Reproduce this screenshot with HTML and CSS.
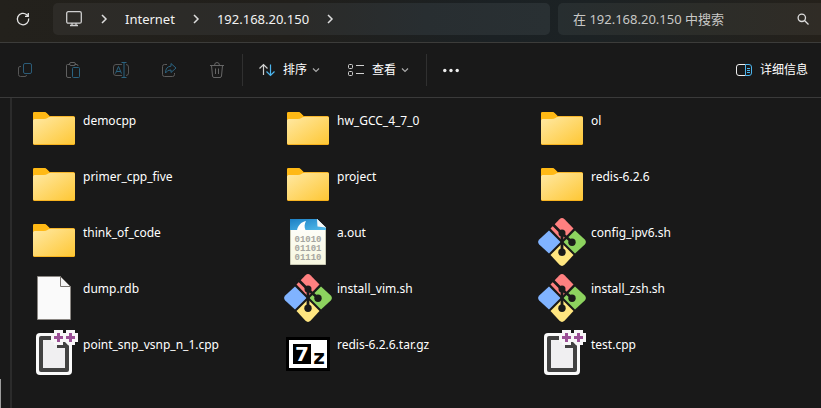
FILE: index.html
```html
<!DOCTYPE html>
<html lang="zh-CN">
<head>
<meta charset="utf-8">
<meta name="viewport" content="width=device-width, initial-scale=1">
<title>192.168.20.150</title>
<link rel="stylesheet" href="styles.css">
</head>
<body>
<svg class="defs" aria-hidden="true">
  <defs>
    <linearGradient id="folder-front" x1="0" y1="0" x2="1" y2="1">
      <stop offset="0" stop-color="#ffe9a4"/><stop offset="1" stop-color="#fec734"/>
    </linearGradient>
    <linearGradient id="page-head" x1="0" y1="0" x2="1" y2="1">
      <stop offset="0" stop-color="#1c7fc4"/><stop offset="1" stop-color="#55bdec"/>
    </linearGradient>
    <linearGradient id="page-body" x1="0" y1="0" x2="0" y2="1">
      <stop offset="0" stop-color="#ffffff"/><stop offset="1" stop-color="#f7f7df"/>
    </linearGradient>
  </defs>
  <symbol id="folder" viewBox="0 0 48 48">
    <path d="M3 7.500Q3 6 4.500 6H14Q15.500 6 16.500 7L19.500 10H43.500Q45 10 45 11.500V37.500Q45 39 43.500 39H4.500Q3 39 3 37.500Z" fill="#f5a90f"/>
    <path d="M3 7.500Q3 6 4.500 6H14Q15.500 6 16.500 7L19.500 10L17 13H3Z" fill="#ffb915"/>
    <path d="M3 14.500Q3 13 4.500 13H14Q16 13 17.500 12L18.500 11.300Q19.500 10.800 21 10.800H43.500Q45 10.800 45 12.300V37Q45 38.300 43.500 38.300H4.500Q3 38.300 3 37Z" fill="url(#folder-front)"/>
  </symbol>
  <symbol id="git" viewBox="0 0 48 48">
    <path d="M21.500 1.200Q24 -1 26.500 1.200L35.500 10.500L24 22.500L12.500 10.500Z" fill="#ff8080"/>
    <path d="M11 12.500L22.500 24L11 35.500L1.200 26.500Q-1 24 1.200 21.500Z" fill="#80b3ff"/>
    <path d="M37 12.500L46.800 21.500Q49 24 46.800 26.500L37 35.500L25.500 24Z" fill="#8dd35f"/>
    <path d="M24 25.500L35.500 37L26.500 46.800Q24 49 21.500 46.800L12.500 37Z" fill="#ffe680"/>
    <path d="M13.500 5L24 15.500V34M24 15.500L34 24" fill="none" stroke="#1a1a1a" stroke-width="2.800"/>
    <g fill="#1a1a1a"><circle cx="24" cy="15" r="3.500"/><circle cx="34" cy="24.300" r="3.700"/><circle cx="24" cy="34.300" r="3.700"/></g>
  </symbol>
  <symbol id="blank" viewBox="0 0 48 48">
    <path d="M7.500 2.500H30.500L40.500 12.500V45.500H7.500Z" fill="#fafafa" stroke="#8b8783"/>
    <path d="M30.500 2.500V12.500H40.500Z" fill="#f4f4f4" stroke="#77736f"/>
  </symbol>
  <symbol id="cpp" viewBox="0 0 48 48">
    <rect x="6" y="3" width="36" height="42" rx="4" fill="#fafafa"/>
    <path d="M9 8Q9 6 11 6H28L39 17V40Q39 42 37 42H11Q9 42 9 40Z" fill="#424242"/>
    <path d="M13 10H27V18H35V38H13Z" fill="#f0eff1"/>
    <path d="M21 3H42V12H33L36 15H27V12H21Z" fill="#fafafa"/>
    <path d="M33 12H36L39 16V19H36L33 15Z" fill="#424242"/>
    <path d="M24 0H33V3H36V0H45V3H48V12H45V15H38L35 12H33V15H24V12H21V3H24Z" fill="#f8f7f8"/>
    <path d="M27 3H30V6H33V9H30V12H27V9H24V6H27ZM39 3H42V6H45V9H42V12H39V9H36V6H39Z" fill="#9b4f96"/>
  </symbol>
  <symbol id="next" viewBox="0 0 8 10"><path d="M2 1L6 5L2 9" fill="none" stroke="#ddd" stroke-width="1.500"/></symbol>
  <symbol id="down" viewBox="0 0 8 6"><path d="M1 1.500L4 4.500L7 1.500" fill="none" stroke="#aaa" stroke-width="1.200"/></symbol>
</svg>

<header class="topbar">
  <button class="refresh" aria-label="刷新"><svg class="i16" viewBox="0 0 16 16" fill="none" stroke="#e4e4e4" stroke-width="1.300"><path d="M13.700 7.500A5.700 5.700 0 1 1 11.800 3.800L13 5M13.300 2V5.300H10"/></svg></button>
  <nav class="address" aria-label="地址">
    <svg class="monitor" viewBox="0 0 18 18" fill="none" stroke="#cfcfcf" stroke-width="1.300"><rect x="1.700" y="1.700" width="14.600" height="11.500" rx="1.500"/><path d="M7 13V15M11 13V15M5 15.500H13"/></svg>
    <svg class="next"><use href="#next"/></svg>
    <a href="#">Internet</a>
    <svg class="next"><use href="#next"/></svg>
    <a href="#">192.168.20.150</a>
    <svg class="next"><use href="#next"/></svg>
  </nav>
  <label class="search">
    <input type="search" aria-label="搜索" placeholder="在 192.168.20.150 中搜索">
    <svg class="lens" viewBox="0 0 12 12" fill="none" stroke="#ddd" stroke-width="1.300"><circle cx="4.800" cy="4.800" r="3.700"/><path d="M7.500 7.500L11.500 11.500"/></svg>
  </label>
</header>

<div class="toolbar" role="toolbar">
  <button class="tool" aria-label="复制" disabled><svg class="i16" viewBox="0 0 16 16" fill="none" stroke="#565656"><path d="M4 4.500H3Q1.500 4.500 1.500 6V12.500Q1.500 14.500 3.500 14.500H8Q9.500 14.500 9.500 13"/><rect x="6.500" y="1.500" width="8" height="10" rx="1.500" stroke="#2b5c78"/></svg></button>
  <button class="tool" aria-label="粘贴" disabled><svg class="i16" viewBox="0 0 16 16" fill="none" stroke="#606060"><path d="M5 2.500H2.500Q1.500 2.500 1.500 3.500V14Q1.500 15.500 3 15.500H6M9.500 2.500H12Q13 2.500 13 4"/><rect x="4.500" y=".5" width="6" height="3" rx="1.500"/><rect x="7.500" y="5.500" width="7" height="10" rx="1" stroke="#2b6380"/></svg></button>
  <button class="tool" aria-label="重命名" disabled><svg class="i16" viewBox="0 0 16 16" fill="none" stroke="#565656"><path d="M9 2.500H3Q.5 2.500 .5 5V11Q.5 13.500 3 13.500H9M13 2.500Q15.500 2.500 15.500 5V11Q15.500 13.500 13 13.500"/><path d="M8.500 .5H13.500M11 .5V15.500M8.500 15.500H13.500M2.500 11.500L5.500 4.500L8.500 11.500M3.500 9.500H7.500" stroke="#2b6380"/></svg></button>
  <button class="tool" aria-label="共享" disabled><svg class="i16" viewBox="0 0 16 16" fill="none" stroke="#5c5c5c"><path d="M6 2.500H3.500Q1.500 2.500 1.500 4.500V12.500Q1.500 14.500 3.500 14.500H11.500Q13.500 14.500 13.500 12.500V11"/><path d="M10 1.500L15 6L10 10.500V8Q6.500 7.500 4.500 11Q4.500 4.500 10 4.200Z" stroke="#2b6380" stroke-linejoin="round"/></svg></button>
  <button class="tool" aria-label="删除" disabled><svg class="i16" viewBox="0 0 16 16" fill="none" stroke="#666"><path d="M1 3.500H15M5.500 3.500Q5.500 .5 8 .5T10.500 3.500M2.500 3.500L3.500 14Q3.700 15.500 5 15.500H11Q12.300 15.500 12.500 14L13.500 3.500M6.500 6.500V12M9.500 6.500V12"/></svg></button>
  <span class="divider"></span>
  <button class="menu"><svg class="i16" viewBox="0 0 16 16" fill="none" stroke-width="1.200"><path d="M4.500 13V2.500M.5 6.500L4.500 2.500L8.500 6.500" stroke="#d0d0d0"/><path d="M11.500 2.500V13.500M7.500 9.500L11.500 13.500L15.500 9.500" stroke="#4cb5ee"/></svg>排序<svg class="down"><use href="#down"/></svg></button>
  <button class="menu view"><svg class="i16" viewBox="0 0 16 16" fill="none" stroke="#d0d0d0"><rect x=".5" y="2.500" width="4" height="4" rx="1"/><rect x=".5" y="9.500" width="4" height="4" rx="1"/><path d="M8 3.500H16M8 11.500H16"/></svg>查看<svg class="down"><use href="#down"/></svg></button>
  <span class="divider"></span>
  <button class="tool" aria-label="更多"><svg class="i16" viewBox="0 0 16 16" fill="#eee"><circle cx="1.800" cy="8.500" r="1.700"/><circle cx="8" cy="8.500" r="1.700"/><circle cx="14.200" cy="8.500" r="1.700"/></svg></button>
  <button class="menu details"><svg class="i16" viewBox="0 0 16 16" fill="none" stroke="#eee"><path d="M9.500 2.500H3Q.5 2.500 .5 5V11Q.5 13.500 3 13.500H9.500"/><path d="M9.500 2.500H13Q15.500 2.500 15.500 5V11Q15.500 13.500 13 13.500H9.500ZM11 6.500H14M11 8.500H14M11 10.500H14" stroke="#4cb5ee"/></svg>详细信息</button>
</div>

<div class="body">
  <aside class="sidebar"><div class="thumb"></div></aside>
  <main>
    <ul class="files">
      <li><svg class="file"><use href="#folder"/></svg>democpp</li>
      <li><svg class="file"><use href="#folder"/></svg>hw_GCC_4_7_0</li>
      <li><svg class="file"><use href="#folder"/></svg>ol</li>
      <li><svg class="file"><use href="#folder"/></svg>primer_cpp_five</li>
      <li><svg class="file"><use href="#folder"/></svg>project</li>
      <li><svg class="file"><use href="#folder"/></svg>redis-6.2.6</li>
      <li><svg class="file"><use href="#folder"/></svg>think_of_code</li>
      <li>
        <svg class="file" viewBox="0 0 48 48">
          <path d="M6.500 1.500H33.500L41.500 9.500V46.500H6.500Z" fill="url(#page-body)" stroke="#c9c9b4"/>
          <path d="M6 1H33L42 10V12H6Z" fill="url(#page-head)"/>
          <path d="M13 12C14 7.500 17 4 22 3C20.500 6 20 9 21.500 12Z" fill="#fff"/>
          <path d="M33 1L42 9.500L33.500 8.500Z" fill="#f7f7f7"/>
          <g class="digits"><text x="24" y="24">01010</text><text x="24" y="33">01101</text><text x="24" y="42">01110</text></g>
        </svg>a.out
      </li>
      <li><svg class="file"><use href="#git"/></svg>config_ipv6.sh</li>
      <li><svg class="file"><use href="#blank"/></svg>dump.rdb</li>
      <li><svg class="file"><use href="#git"/></svg>install_vim.sh</li>
      <li><svg class="file"><use href="#git"/></svg>install_zsh.sh</li>
      <li><svg class="file"><use href="#cpp"/></svg>point_snp_vsnp_n_1.cpp</li>
      <li>
        <svg class="file" viewBox="0 0 48 48">
          <rect x="2" y="7" width="44" height="34" fill="#000"/><rect x="5" y="10" width="38" height="28" fill="#fff"/>
          <rect x="9" y="14" width="18" height="20" fill="#000"/>
          <text class="zip-7" x="18" y="31">7</text><text class="zip-z" x="35" y="34">z</text>
        </svg>redis-6.2.6.tar.gz
      </li>
      <li><svg class="file"><use href="#cpp"/></svg>test.cpp</li>
    </ul>
  </main>
</div>
</body>
</html>
```
FILE: styles.css
```css
* { box-sizing: border-box; }
body {
  margin: 0;
  min-height: 100vh;
  display: flex;
  flex-direction: column;
  background: #191919;
  color: #fff;
  font: 12px/16px "Noto Sans", "Noto Sans CJK SC", sans-serif;
}
svg { display: block; flex: none; }
.defs { width: 0; height: 0; position: absolute; }
button { background: none; border: 0; padding: 0; color: inherit; font: inherit; }
a { color: #f2f2f2; text-decoration: none; }
.i16 { width: 16px; height: 16px; }

.topbar {
  display: flex;
  gap: 8px;
  padding: 3px 0 7px;
  border-bottom: 1px solid #3c3c3a;
  background: linear-gradient(90deg, #23211c, #211f1b 35%, #1b2124 60%, #1c2224 72%, #25211b);
  font-size: 13px;
}
.refresh { width: 45px; display: grid; place-items: center; }
.address {
  flex: 1;
  height: 32px;
  display: flex;
  align-items: center;
  gap: 17px;
  padding: 0 12px;
  border-radius: 5px;
  background: linear-gradient(90deg, #2d2b27, #2b2b29 50%, #282e31 75%, #293033);
}
.monitor { width: 18px; height: 18px; }
.next { width: 8px; height: 10px; }
.search {
  flex: 0 0 263px;
  height: 32px;
  display: flex;
  align-items: center;
  padding: 0 12px 0 15px;
  border-radius: 5px 0 0 5px;
  background: linear-gradient(90deg, #272e30, #2c2d29 55%, #302c26);
}
.search input { flex: 1; min-width: 0; border: 0; padding: 0; background: none; color: #fff; font: inherit; }
.search input::placeholder { color: #c8c8c6; opacity: 1; }
.lens { width: 12px; height: 12px; }

.toolbar {
  height: 55px;
  display: flex;
  align-items: center;
  padding: 0 13px 0 1px;
  border-bottom: 1px solid #3a3a3a;
}
.tool { width: 48px; height: 32px; display: grid; place-items: center; }
.divider { width: 1px; height: 32px; margin-left: 1px; background: #303030; }
.menu { display: flex; align-items: center; gap: 8px; height: 32px; margin-left: 16px; }
.down { width: 8px; height: 6px; margin-left: -3px; }
.view { margin: 0 16px 0 28px; }
.details { margin-left: auto; }

.body { flex: 1; display: flex; }
.sidebar { width: 12px; border-right: 2px solid #2b2b2b; display: flex; align-items: flex-end; }
.thumb { width: 1px; height: 29px; background: #9c9c9c; }
main { flex: 1; }
.files {
  display: grid;
  grid-template-columns: repeat(auto-fill, 254px);
  grid-auto-rows: 56px;
  margin: 0;
  padding: 8px 0 8px 18px;
  list-style: none;
}
.files li { display: flex; gap: 5px; line-height: 30px; }
.file { width: 48px; height: 48px; }
.digits { font: bold 9px/9px "Liberation Mono", monospace; fill: #a5a5a0; text-anchor: middle; }
.zip-7, .zip-z { font: bold 20px/20px "DejaVu Sans", sans-serif; text-anchor: middle; }
.zip-7 { fill: #fff; }
```
